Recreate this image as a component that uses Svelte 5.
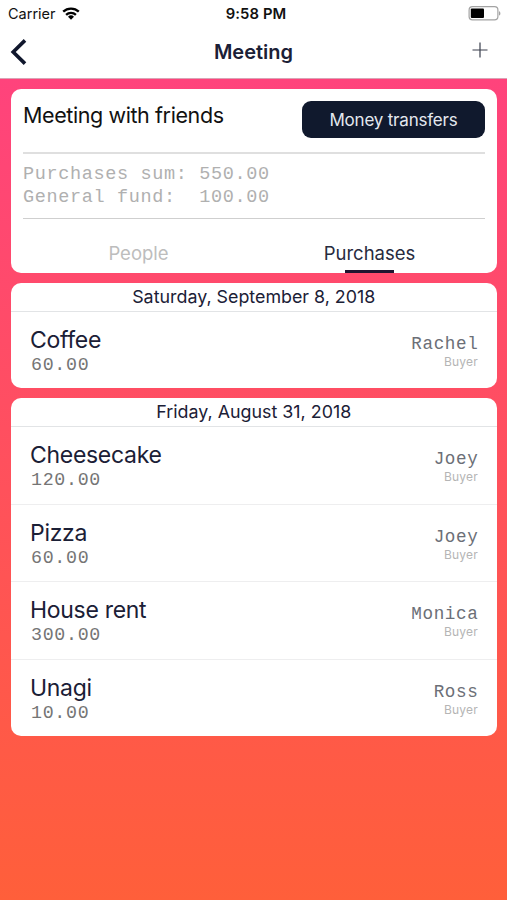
<script>
	const meeting = {
		title: 'Meeting with friends',
		purchasesSum: 550,
		generalFund: 100
	};

	const tabs = ['People', 'Purchases'];
	let activeTab = $state('Purchases');

	const days = [
		{
			date: 'Saturday, September 8, 2018',
			purchases: [{ name: 'Coffee', price: 60, buyer: 'Rachel' }]
		},
		{
			date: 'Friday, August 31, 2018',
			purchases: [
				{ name: 'Cheesecake', price: 120, buyer: 'Joey' },
				{ name: 'Pizza', price: 60, buyer: 'Joey' },
				{ name: 'House rent', price: 300, buyer: 'Monica' },
				{ name: 'Unagi', price: 10, buyer: 'Ross' }
			]
		}
	];

	const money = (value) => value.toFixed(2);
</script>

<div class="screen">
	<header>
		<div class="status">
			<div class="carrier">
				<span>Carrier</span>
				<svg width="18" height="13" viewBox="0 0 18 13">
					<g fill="none" stroke="#000" stroke-width="2.3">
						<path d="M1.2 4.7a11.2 11.2 0 0 1 15.6 0" />
						<path d="M4.1 7.9a7 7 0 0 1 9.8 0" />
					</g>
					<path d="M9 12.7 6 9.8a4.3 4.3 0 0 1 6 0z" />
				</svg>
			</div>
			<span class="time">9:58 PM</span>
			<svg class="battery" width="33" height="15" viewBox="0 0 33 15">
				<rect x="1.1" y="0.7" width="28.8" height="13.2" rx="3.4" fill="#fff" stroke="#a3a3a3" stroke-width="1.2" />
				<rect x="2.8" y="2.6" width="13.2" height="9.4" rx="1" />
				<path d="M31 5.2v4.4c1-.4 1.4-1.2 1.4-2.2s-.4-1.8-1.4-2.2z" fill="#a3a3a3" />
			</svg>
		</div>
		<nav>
			<button class="back" aria-label="Back">
				<svg width="18" height="28" viewBox="0 0 18 28" fill="none" stroke="#10172d" stroke-width="3.6"><path d="M15 2.4 3.2 14 15 25.6" /></svg>
			</button>
			<h1>Meeting</h1>
			<button class="add" aria-label="Add purchase">
				<svg width="16" height="16" viewBox="0 0 16 16" stroke="#3a3f4d" stroke-width="1.2"><path d="M8 .5v15M.5 8h15" /></svg>
			</button>
		</nav>
	</header>

	<main>
		<section class="card summary">
			<div class="title-row">
				<h2>{meeting.title}</h2>
				<button class="transfers">Money transfers</button>
			</div>
			<div class="totals">
				<div class="total"><span class="label">Purchases sum:</span>{money(meeting.purchasesSum)}</div>
				<div class="total"><span class="label">General fund:</span>{money(meeting.generalFund)}</div>
			</div>
			<div class="tabs">
				{#each tabs as tab}
					<button class="tab" class:active={tab === activeTab} onclick={() => (activeTab = tab)}>
						{tab}
					</button>
				{/each}
			</div>
		</section>

		{#each days as day}
			<section class="card">
				<h3>{day.date}</h3>
				{#each day.purchases as purchase}
					<div class="purchase">
						<div>
							<div class="name">{purchase.name}</div>
							<div class="price">{money(purchase.price)}</div>
						</div>
						<div class="buyer">
							<div class="buyer-name">{purchase.buyer}</div>
							<div class="role">Buyer</div>
						</div>
					</div>
				{/each}
			</section>
		{/each}
	</main>
</div>

<style>
	:global(body) {
		margin: 0;
	}

	.screen {
		box-sizing: border-box;
		min-height: 900px;
		background: linear-gradient(#ff437c 79px, #ff5f3a 100%);
		font-family: Inter, 'Liberation Sans', sans-serif;
		color: #1b2036;
	}

	button {
		padding: 0;
		border: none;
		background: none;
		font-family: inherit;
		color: inherit;
		cursor: pointer;
	}

	h1,
	h2,
	h3 {
		margin: 0;
		font-weight: 400;
	}

	header {
		box-sizing: border-box;
		height: 79px;
		background: #fff;
		border-bottom: 1px solid #d9a3b5;
	}

	.status {
		display: grid;
		grid-template-columns: 1fr auto 1fr;
		align-items: center;
		height: 27px;
		padding: 0 6px 0 8px;
		color: #111;
	}

	.carrier {
		display: flex;
		align-items: center;
		gap: 6px;
		font-size: 14.5px;
	}

	.time {
		margin-left: 3px;
		font-size: 14.8px;
		font-weight: 600;
		letter-spacing: 0.1px;
	}

	.battery {
		justify-self: end;
	}

	nav {
		display: grid;
		grid-template-columns: 1fr auto 1fr;
		align-items: center;
		height: 50px;
		padding: 0 10px;
	}

	.back {
		justify-self: start;
		display: flex;
	}

	.add {
		justify-self: end;
		display: flex;
		padding: 0 9px 4px 0;
	}

	h1 {
		font-size: 20px;
		font-weight: 600;
	}

	main {
		display: flex;
		flex-direction: column;
		gap: 10px;
		padding: 10px 10px 0 10.5px;
	}

	.card {
		border-radius: 10px;
		background: #fff;
		overflow: hidden;
	}

	.summary {
		box-sizing: border-box;
		height: 184px;
		padding: 0 12px 0 12.5px;
	}

	.title-row {
		display: flex;
		justify-content: space-between;
		align-items: flex-start;
		box-sizing: border-box;
		height: 65px;
		padding-top: 12px;
		border-bottom: 2px solid #dfdfdf;
	}

	h2 {
		font-size: 21.5px;
		letter-spacing: -0.4px;
		line-height: 28px;
		color: #111;
	}

	.transfers {
		width: 183px;
		height: 37px;
		border-radius: 9px;
		background: #10192d;
		color: #e4e8ef;
		font-size: 17px;
		letter-spacing: -0.2px;
	}

	.totals {
		box-sizing: border-box;
		height: 65px;
		padding-top: 10px;
		border-bottom: 1px solid #cfcfcf;
		font-family: 'Liberation Mono', monospace;
		font-size: 18.5px;
		letter-spacing: 0.65px;
		line-height: 22.5px;
		color: #b0b0b0;
	}

	.total {
		display: flex;
	}

	.label {
		width: 176.3px;
	}

	.tabs {
		display: flex;
		height: 54px;
	}

	.tab {
		position: relative;
		flex: 1;
		padding-bottom: 2px;
		padding-top: 16px;
		font-size: 18.5px;
		color: #bdbdbd;
	}

	.tab.active {
		color: #272b40;
	}

	.tab.active::after {
		content: '';
		position: absolute;
		left: 50%;
		bottom: 0;
		width: 49px;
		height: 3px;
		margin-left: -25px;
		background: #1f1530;
	}

	h3 {
		box-sizing: border-box;
		height: 29px;
		border-bottom: 1px solid #e2e4e6;
		font-size: 17.85px;
		line-height: 28px;
		text-align: center;
	}

	.purchase {
		display: flex;
		justify-content: space-between;
		height: 76.4px;
		padding: 0 19px 0 19.5px;
	}

	.purchase + .purchase {
		border-top: 1px solid #eeeeef;
	}

	.name {
		padding-top: 14px;
		font-size: 23px;
		letter-spacing: -0.3px;
		line-height: 28px;
	}

	.price {
		padding: 1px 0 0 1px;
		font-family: 'Liberation Mono', monospace;
		font-size: 18.3px;
		letter-spacing: 0.7px;
		line-height: 21px;
		color: #757575;
	}

	.buyer {
		padding-top: 21px;
		text-align: right;
	}

	.buyer-name {
		margin-right: -0.5px;
		font-family: 'Liberation Mono', monospace;
		font-size: 17.6px;
		letter-spacing: 0.65px;
		line-height: 22px;
		color: #6c6f77;
	}

	.role {
		font-size: 12px;
		letter-spacing: 0.2px;
		line-height: 14px;
		color: #b5b5b5;
	}
</style>
